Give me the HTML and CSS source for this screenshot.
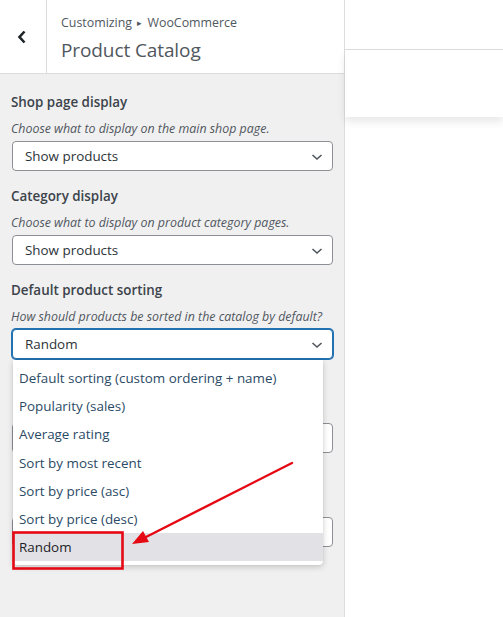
FILE: index.html
```html
<!DOCTYPE html>
<html lang="en">
<head>
<meta charset="utf-8">
<title>Customizing WooCommerce: Product Catalog</title>
<link rel="stylesheet" href="styles.css">
</head>
<body>
<div class="app">
  <aside class="sidebar">
    <header class="panel-head">
      <button class="back" type="button" aria-label="Back">
        <svg width="10" height="14" viewBox="0 0 10 14"><polyline points="7.5,1.5 2.5,7 7.5,12.5" fill="none" stroke="#1d2327" stroke-width="2.6" stroke-linejoin="miter"/></svg>
      </button>
      <div class="titles">
        <div class="crumb">Customizing <span class="tri">&#9656;</span> WooCommerce</div>
        <h1 class="title">Product Catalog</h1>
      </div>
    </header>

    <div class="controls">
      <div class="control">
        <div class="label">Shop page display</div>
        <div class="desc">Choose what to display on the main shop page.</div>
        <div class="select"><span>Show products</span><svg class="chev" width="12" height="8" viewBox="0 0 12 8"><polyline points="1.5,2 6,6 10.5,2" fill="none" stroke="#50575e" stroke-width="1.6"/></svg></div>
      </div>
      <div class="control">
        <div class="label">Category display</div>
        <div class="desc">Choose what to display on product category pages.</div>
        <div class="select"><span>Show products</span><svg class="chev" width="12" height="8" viewBox="0 0 12 8"><polyline points="1.5,2 6,6 10.5,2" fill="none" stroke="#50575e" stroke-width="1.6"/></svg></div>
      </div>
      <div class="control">
        <div class="label">Default product sorting</div>
        <div class="desc">How should products be sorted in the catalog by default?</div>
        <div class="select-wrap">
          <div class="select focus"><span>Random</span><svg class="chev" width="12" height="8" viewBox="0 0 12 8"><polyline points="1.5,2 6,6 10.5,2" fill="none" stroke="#50575e" stroke-width="1.6"/></svg></div>
          <ul class="menu">
            <li>Default sorting (custom ordering + name)</li>
            <li>Popularity (sales)</li>
            <li>Average rating</li>
            <li>Sort by most recent</li>
            <li>Sort by price (asc)</li>
            <li>Sort by price (desc)</li>
            <li class="active">Random</li>
          </ul>
        </div>
      </div>
      <!-- further controls sit underneath the open list -->
      <div class="control">
        <div class="label-space"></div>
        <div class="desc-space"></div>
        <div class="select"></div>
      </div>
      <div class="control">
        <div class="label-space"></div>
        <div class="desc-space"></div>
        <div class="select"></div>
      </div>
    </div>
  </aside>

  <main class="preview">
    <div class="preview-bar"></div>
    <div class="preview-box"></div>
  </main>

  <svg class="markup" width="503" height="617" viewBox="0 0 503 617">
    <rect x="13.5" y="532.5" width="109" height="36" fill="none" stroke="#e50914" stroke-width="2.6"/>
    <line x1="292" y1="463" x2="146" y2="537" stroke="#e50914" stroke-width="2.4" stroke-linecap="round"/>
    <polygon points="132,544 143,531 149,542" fill="#e50914"/>
  </svg>
</div>
</body>
</html>
```

FILE: styles.css
```css
* { box-sizing: border-box; }

html, body {
  margin: 0;
  padding: 0;
  height: 100%;
  background: #fff;
  font-family: "Open Sans", "Noto Sans", sans-serif;
  color: #1d2327;
}

.app {
  position: relative;
  display: flex;
  width: 503px;
  height: 617px;
  overflow: hidden;
}

.sidebar {
  width: 345px;
  flex: none;
  background: #f0f0f1;
  border-right: 1px solid #dcdcde;
}

.panel-head {
  display: flex;
  height: 74px;
  background: #fff;
  border-bottom: 1px solid #dcdcde;
}

.back {
  width: 47px;
  flex: none;
  border: 0;
  border-right: 1px solid #dcdcde;
  background: #fff;
  display: flex;
  align-items: center;
  justify-content: center;
  padding: 0 2px 0 0;
  margin: 0;
}

.titles {
  padding: 14px 0 0 14px;
}

.crumb {
  font-size: 12.4px;
  line-height: 18px;
  color: #50575e;
}

.tri {
  font-size: 9px;
  position: relative;
  top: -1px;
  margin: 0 2px;
}

.title {
  margin: 5px 0 0;
  font-size: 19px;
  font-weight: 400;
  line-height: 24px;
  color: #50575e;
  letter-spacing: -0.1px;
}

.controls {
  padding: 18px 11px 0 11px;
  display: flex;
  flex-direction: column;
  gap: 15px;
}

.control {
  display: flex;
  flex-direction: column;
}

.label,
.label-space {
  height: 20px;
  font-size: 13.4px;
  font-weight: 600;
  line-height: 20px;
  color: #3c434a;
  margin-bottom: 8px;
}

.desc,
.desc-space {
  height: 18px;
  font-size: 12.4px;
  font-style: italic;
  line-height: 18px;
  color: #50575e;
  margin-bottom: 3px;
}

.select {
  position: relative;
  height: 30px;
  margin-left: 1px;
  background: #fff;
  border: 1px solid #8c8f94;
  border-radius: 4px;
  display: flex;
  align-items: center;
  padding-left: 12px;
  font-size: 13.4px;
  color: #2c3338;
}

.select.focus {
  border-color: #2271b1;
  box-shadow: 0 0 0 1px #2271b1;
}

.chev {
  position: absolute;
  right: 9px;
  top: 11px;
}

.select-wrap {
  position: relative;
}

.menu {
  position: absolute;
  z-index: 2;
  left: 2px;
  top: 31px;
  width: 310px;
  margin: 0;
  padding: 4px 0 4px;
  list-style: none;
  background: #fff;
  border-radius: 0 0 4px 4px;
  box-shadow: 0 2px 6px rgba(0, 0, 0, 0.18), 0 0 1px rgba(0, 0, 0, 0.2);
}

.menu li {
  height: 28.2px;
  line-height: 28px;
  padding-left: 6px;
  font-size: 13.4px;
  color: #2b4a66;
}

.menu li.active {
  background: #e2e2e6;
  color: #1d2327;
}

.preview {
  flex: 1;
  background: #fff;
}

.preview-bar {
  height: 50px;
  border-bottom: 1px solid #dcdcde;
}

.preview-box {
  height: 67px;
  background: #fff;
  box-shadow: 0 5px 8px rgba(0, 0, 0, 0.09);
}

.markup {
  position: absolute;
  left: 0;
  top: 0;
  pointer-events: none;
  z-index: 5;
}
```
